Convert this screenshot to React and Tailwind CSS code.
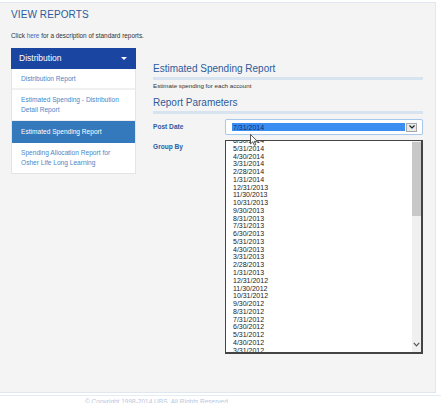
import React from "react";

const dates = [
  "6/30/2014","5/31/2014","4/30/2014","3/31/2014","2/28/2014","1/31/2014",
  "12/31/2013","11/30/2013","10/31/2013","9/30/2013","8/31/2013","7/31/2013",
  "6/30/2013","5/31/2013","4/30/2013","3/31/2013","2/28/2013","1/31/2013",
  "12/31/2012","11/30/2012","10/31/2012","9/30/2012","8/31/2012","7/31/2012",
  "6/30/2012","5/31/2012","4/30/2012","3/31/2012","2/29/2012",
];

function NavItem({ children, active }) {
  return (
    <div
      className={
        active
          ? "bg-[#3479bb] text-white px-[9px] h-[22px] flex items-center text-[6.6px] leading-[10px]"
          : "text-[#4a87c8] px-[9px] py-[5px] text-[6.6px] leading-[10px] border-b border-[#eeeeee]"
      }
    >
      {children}
    </div>
  );
}

export default function App() {
  return (
    <div
      className="relative w-[441px] h-[403px] overflow-hidden bg-white"
      style={{ fontFamily: '"Liberation Sans", Arial, sans-serif' }}
    >
      <div className="h-[2px] bg-white" />
      <div className="w-[436px] h-[391px] bg-[#f4f4f4] border-t border-r border-b border-[#dfe7f0] px-[11px]">
        <div className="pt-[6px] text-[10px] leading-[12px] text-[#2d5b9b] tracking-[0.1px]">VIEW REPORTS</div>
        <div className="mt-[11px] text-[6.4px] leading-[8px] text-[#333]">
          Click <span className="text-[#2f6fc0]">here</span> for a description of standard reports.
        </div>
        <div className="flex mt-[8px]">
          <div className="w-[125px] shrink-0">
            <div className="h-[21px] bg-[#1a45a0] flex items-center justify-between px-[8px] text-white text-[8.5px]">
              <span>Distribution</span>
              <span className="w-0 h-0 border-l-[3px] border-r-[3px] border-t-[3px] border-l-transparent border-r-transparent border-t-white mr-[1px]" />
            </div>
            <div className="bg-white border border-t-0 border-[#e4e4e4]">
              <div className="text-[#4a87c8] px-[9px] h-[21px] flex items-center text-[6.6px] border-b-2 border-[#f0f0f0]">
                Distribution Report
              </div>
              <NavItem>Estimated Spending - Distribution Detail Report</NavItem>
              <NavItem active>Estimated Spending Report</NavItem>
              <div className="text-[#4a87c8] px-[9px] pt-[5px] pb-[5px] text-[6.6px] leading-[10px]">
                Spending Allocation Report for Osher Life Long Learning
              </div>
            </div>
          </div>
          <div className="ml-[17px] flex-1 pr-[1px]">
            <div className="mt-[15px] text-[10px] leading-[12px] text-[#2d5b9b]">Estimated Spending Report</div>
            <div className="mt-[2px] h-[3px] bg-[#d8e3f0] w-[270px]" />
            <div className="mt-[2px] text-[6.2px] leading-[8px] text-[#333]">Estimate spending for each account</div>
            <div className="mt-[7px] text-[10px] leading-[12px] text-[#2d5b9b]">Report Parameters</div>
            <div className="mt-[2px] h-[3px] bg-[#d8e3f0] w-[270px]" />
            <div className="flex mt-[5px]">
              <div className="w-[72px] shrink-0">
                <div className="h-[16px] flex items-center text-[6.6px] font-bold text-[#2f5aa0]">Post Date</div>
                <div className="mt-[4px] h-[16px] flex items-center text-[6.6px] font-bold text-[#2f5aa0]">Group By</div>
              </div>
              <div className="w-[198px]">
                <div className="h-[16px] border border-[#a9c9ec] rounded-[2px] bg-white flex items-center pl-[6px] pr-[3px] shadow-[0_0_1px_#c8dcf4]">
                  <div className="h-[8px] w-[173px] bg-[#3a8ef2] flex items-center text-[7px] text-[#0d2c6a] pl-[1px] leading-none">
                    7/31/2014
                  </div>
                  <div className="ml-[1px] w-[11px] h-[9px] bg-[#e9e9e9] border border-[#a8a8a8] flex items-center justify-center">
                    <svg width="6" height="4" viewBox="0 0 6 4">
                      <path d="M0.5 0.5 L3 3 L5.5 0.5" stroke="#222" strokeWidth="1.2" fill="none" />
                    </svg>
                  </div>
                </div>
                <div className="mt-[5px] h-[214px] bg-white border border-[#444] border-l-[1px] border-b-[2px] border-r-[2px] flex overflow-hidden">
                  <div className="flex-1 overflow-hidden pl-[7px]">
                    <div className="-mt-[4px]">
                      {dates.map((d) => (
                        <div key={d} className="text-[7px] leading-[7.77px] h-[7.77px] text-[#222]">
                          {d}
                        </div>
                      ))}
                    </div>
                  </div>
                  <div className="w-[9px] bg-[#f0f0f0] flex flex-col">
                    <div className="h-[74px] bg-[#c8c8c8] mt-[1px]" />
                    <div className="flex-1" />
                    <div className="h-[12px] flex items-center justify-center mb-[2px]">
                      <svg width="7" height="5" viewBox="0 0 7 5">
                        <path d="M0.8 0.8 L3.5 3.8 L6.2 0.8" stroke="#555" strokeWidth="1.2" fill="none" />
                      </svg>
                    </div>
                  </div>
                </div>
              </div>
            </div>
          </div>
        </div>
      </div>
      <div className="border-t border-[#e3ebf3] mt-[2px] w-[441px]" />
      <div className="pl-[85px] text-[6.5px] leading-[8px] text-[#b8c6de] mt-[2px]">
        © Copyright 1998-2014 UBS. All Rights Reserved.
      </div>
      <svg className="absolute left-[250px] top-[134px]" width="8" height="12" viewBox="0 0 8 12">
        <path d="M0.5 0.5 L0.5 10 L2.8 7.8 L4.4 11.3 L5.8 10.7 L4.3 7.3 L7.4 7.3 Z" fill="#fff" stroke="#333" strokeWidth="0.8" />
      </svg>
    </div>
  );
}
